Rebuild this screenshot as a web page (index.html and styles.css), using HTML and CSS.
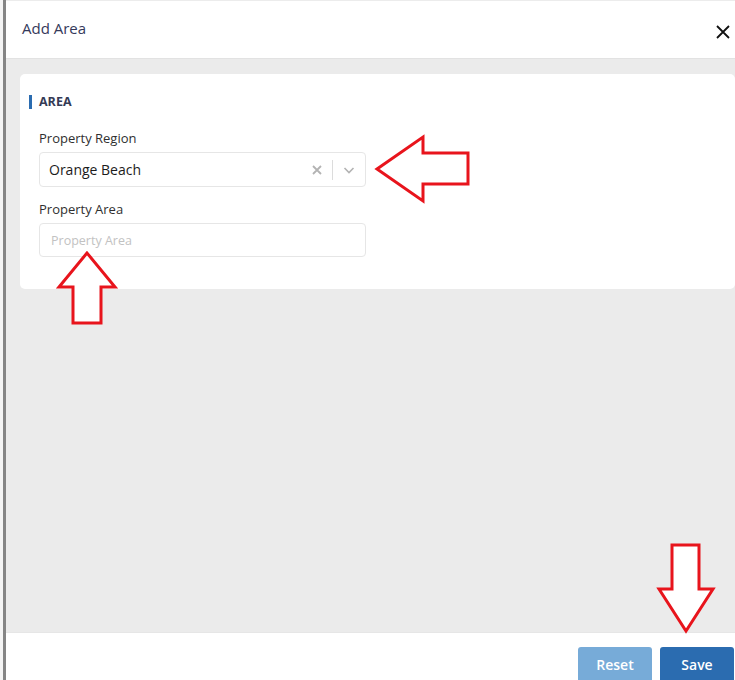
FILE: index.html
```html
<!DOCTYPE html>
<html lang="en">
<head>
  <meta charset="UTF-8">
  <title>Add Area</title>
  <link rel="stylesheet" href="styles.css">
</head>
<body>

<div class="modal">
  <div class="modal-header">
    <h1>Add Area</h1>
    <button class="close" aria-label="Close">
      <svg width="14" height="14" viewBox="0 0 14 14"><path d="M1 1L13 13M13 1L1 13" stroke="#111" stroke-width="1.8" fill="none"/></svg>
    </button>
  </div>

  <div class="modal-body">
    <div class="card">
      <h2 class="section-title">AREA</h2>

      <label>Property Region</label>
      <div class="select">
        <span class="select-value">Orange Beach</span>
        <span class="select-icons">
          <svg width="12" height="12" viewBox="0 0 12 12"><path d="M2 2L10 10M10 2L2 10" stroke="#b3b3b3" stroke-width="1.8" fill="none"/></svg>
          <span class="sep"></span>
          <svg width="14" height="14" viewBox="0 0 14 14"><path d="M2.5 5L7 9.5L11.5 5" stroke="#b3b3b3" stroke-width="1.6" fill="none"/></svg>
        </span>
      </div>

      <label>Property Area</label>
      <input type="text" placeholder="Property Area">
    </div>
  </div>

  <div class="modal-footer">
    <button class="btn btn-reset">Reset</button>
    <button class="btn btn-save">Save</button>
  </div>
</div>

<!-- annotation arrows -->
<svg class="arrow arrow-left" width="100" height="70" viewBox="370 134 100 70">
  <polygon points="377,169 423,137 423,153 468,153 468,184 423,184 423,201" fill="#fff" stroke="#e8141c" stroke-width="3"/>
</svg>
<svg class="arrow arrow-up" width="64" height="76" viewBox="55 250 64 76">
  <polygon points="87,253 59,287 73,287 73,323 101,323 101,287 115,287" fill="#fff" stroke="#e8141c" stroke-width="3"/>
</svg>
<svg class="arrow arrow-down" width="62" height="92" viewBox="655 542 62 92">
  <polygon points="672,545 699,545 699,589 713,589 686,631 659,589 672,589" fill="#fff" stroke="#e8141c" stroke-width="3"/>
</svg>

</body>
</html>
```

FILE: styles.css
```css
body {
  margin: 0;
  font-family: "Open Sans", "Liberation Sans", sans-serif;
  background-color: #f4f4f4;
  overflow: hidden;
}
.modal {
  margin-left: 3px;
  height: 680px;
  border-left: 3px solid #858585;
  background-color: white;
  display: flex;
  flex-direction: column;
  overflow: hidden;
}
.modal-header {
  height: 59px;
  flex: none;
  box-sizing: border-box;
  border-top: 1px solid #ececec;
  border-bottom: 1px solid #e2e2e2;
  display: flex;
  align-items: center;
  justify-content: space-between;
  padding: 0 5px 3px 16px;
}
.modal-header h1 {
  margin: 0;
  font-size: 15px;
  font-weight: 500;
  color: #34395a;
}
.close {
  background: none;
  border: none;
  padding: 0;
  margin-top: 7px;
  width: 14px;
  height: 14px;
  cursor: pointer;
}
.modal-body {
  flex: 1;
  background-color: #ebebeb;
  padding: 15px 1px 0 14px;
}
.card {
  background-color: white;
  border-radius: 5px;
  padding: 21px 19px 32px 19px;
  width: 677px;
}
.section-title {
  margin: 0 0 20px -10px;
  padding-left: 7px;
  border-left: 3px solid #2b6cb0;
  font-size: 12.5px;
  font-weight: 700;
  color: #343a55;
  line-height: 14px;
}
label {
  display: block;
  font-size: 13px;
  color: #2f2f2f;
  margin-bottom: 5px;
  line-height: 18px;
}
.select {
  width: 327px;
  height: 35px;
  box-sizing: border-box;
  border: 1px solid #e6e6e6;
  border-radius: 4px;
  display: flex;
  align-items: center;
  justify-content: space-between;
  padding: 0 9px 0 9px;
  margin-bottom: 13px;
}
.select-value {
  font-size: 14px;
  color: #1c1c1c;
}
.select-icons {
  display: flex;
  align-items: center;
  gap: 9px;
}
.sep {
  width: 1px;
  height: 20px;
  background-color: #dcdcdc;
}
input {
  width: 327px;
  height: 34px;
  box-sizing: border-box;
  border: 1px solid #e6e6e6;
  border-radius: 4px;
  padding: 0 11px;
  font-family: inherit;
  font-size: 12.5px;
  display: block;
}
input::placeholder {
  color: #c2c2c2;
}
.modal-footer {
  flex: none;
  height: 48px;
  box-sizing: border-box;
  padding-top: 14px;
  border-top: 1px solid #e6e6e6;
  display: flex;
  justify-content: flex-end;
  gap: 8px;
  padding-right: 1px;
}
.btn {
  width: 74px;
  height: 38px;
  flex: none;
  border: none;
  border-radius: 3px;
  color: white;
  font-family: inherit;
  font-size: 14px;
  font-weight: 600;
  padding-bottom: 4px;
  cursor: pointer;
}
.btn-reset {
  background-color: #77abd8;
}
.btn-save {
  background-color: #2b6cb0;
}
.arrow {
  position: absolute;
}
.arrow-left {
  left: 370px;
  top: 134px;
}
.arrow-up {
  left: 55px;
  top: 250px;
}
.arrow-down {
  left: 655px;
  top: 542px;
}
```
